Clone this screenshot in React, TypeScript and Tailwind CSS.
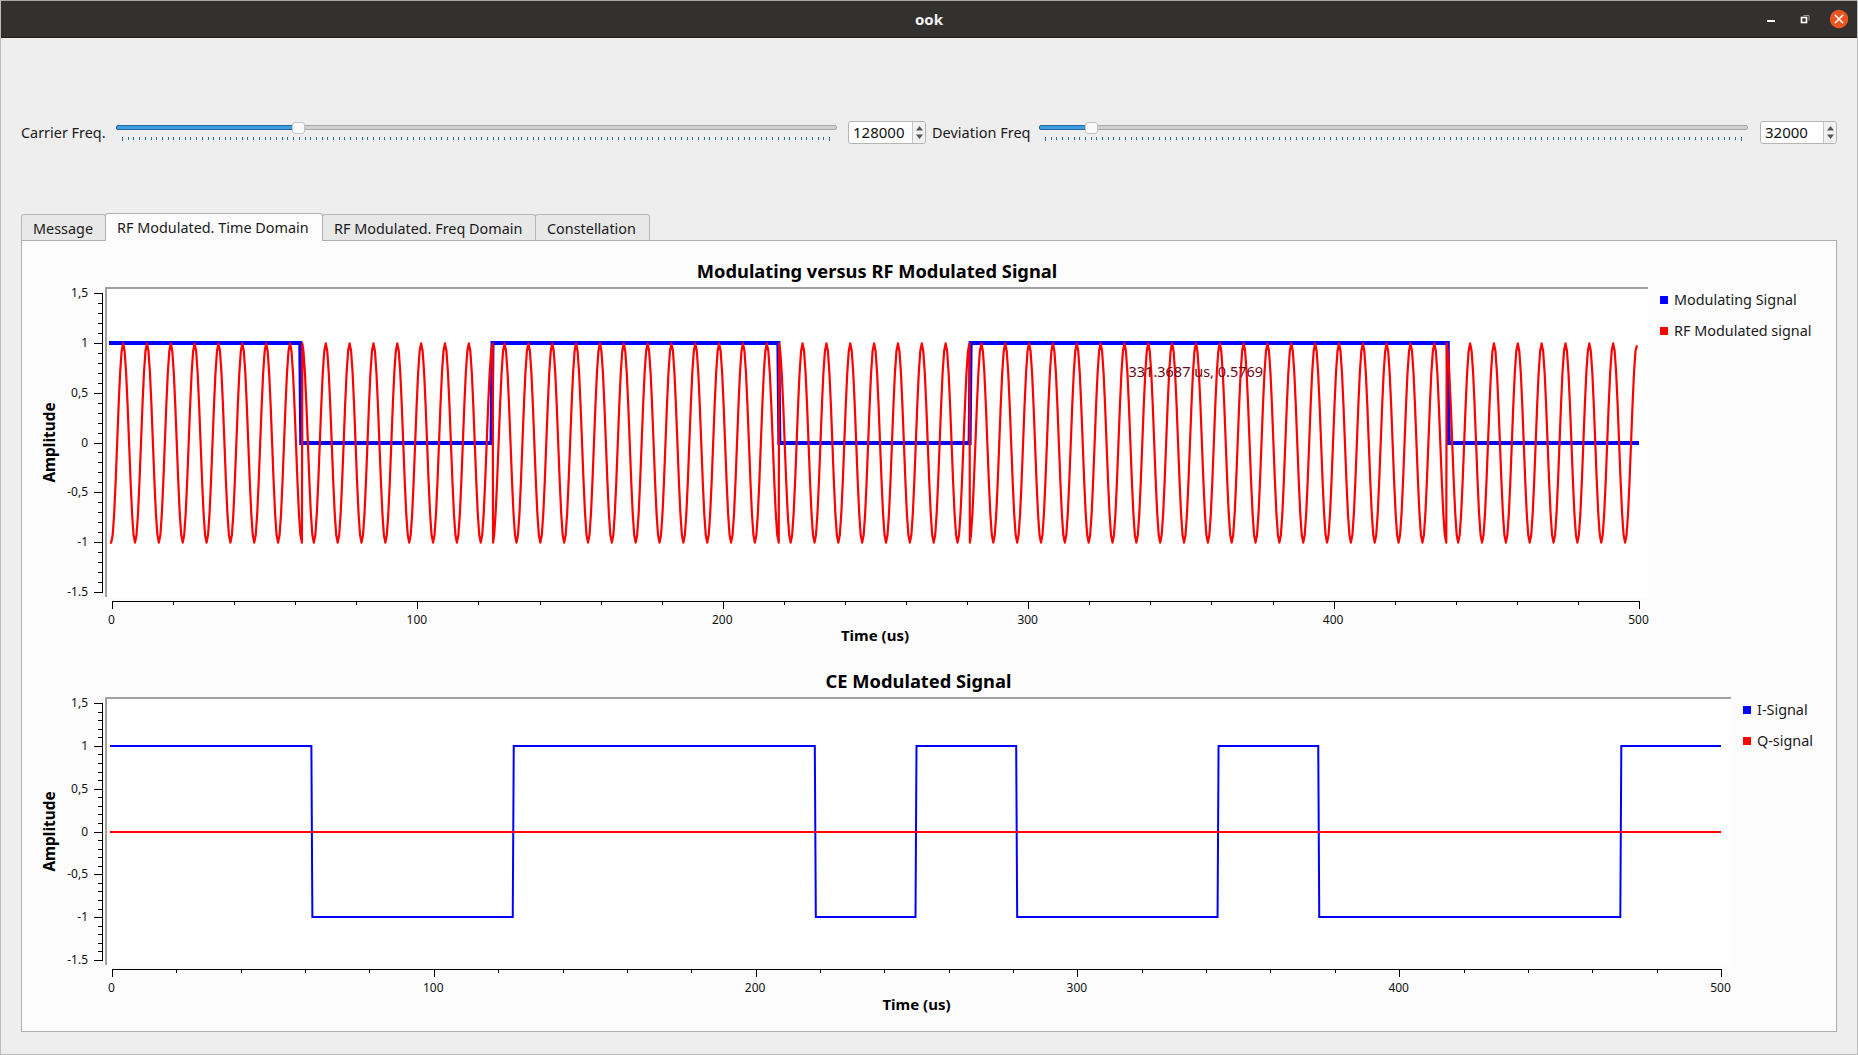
import React from "react";

const SEGMENTS = [62.5, 125, 218.75, 281.25, 437.5, 500];
const IQ_STEPS = [62.5, 125, 218.75, 250, 281.25, 343.75, 375, 468.75, 500];

/** Square wave path, alternating between two levels at each step time */
function stepPath(steps: number[], x: (t: number) => number, hi: number, lo: number) {
  let level = hi;
  let d = `M${x(0)} ${hi}`;
  steps.forEach((t, i) => {
    d += ` L${x(t)} ${level}`;
    if (i < steps.length - 1) {
      level = level === hi ? lo : hi;
      d += ` L${x(t) + 1} ${level}`;
    }
  });
  return d;
}

/** OOK carrier: phase flips every time the modulating signal changes */
function rfPath() {
  const x = (t: number) => 111.2 + 3.0516 * t;
  const y = (v: number) => 443 - 99.6 * v;
  const dt = 7.8125 / 16;
  const sign = (t: number) => {
    let idx = SEGMENTS.findIndex((s) => t < s - 1e-6);
    if (idx < 0) idx = SEGMENTS.length - 1;
    return idx % 2 === 0 ? -1 : 1;
  };
  let d = `M110 ${y(-1)}`;
  for (let i = 0; i <= 1024; i++) {
    const t = i * dt;
    const c = Math.cos(2 * Math.PI * 0.128 * t);
    if (i > 0 && i < 1024 && sign(t) !== sign(t - dt)) {
      d += ` L${x(t).toFixed(2)} ${y(sign(t - dt) * c).toFixed(2)}`;
      d += ` L${(x(t) + 0.4).toFixed(2)} ${y(sign(t) * c).toFixed(2)}`;
    } else {
      d += ` L${x(t).toFixed(2)} ${y((i === 1024 ? 1 : sign(t)) * c * (i === 1024 ? 0.98 : 1)).toFixed(2)}`;
    }
  }
  return d;
}

interface AxisProps {
  box: { x: number; y: number; w: number; h: number };
  canvasRight: number;
  canvasBottom: number;
  frameTop: number;
  frameBottom: number;
  yTop: number;
  yBottom: number;
  xZero: number;
  xEnd: number;
  xAxisY: number;
  children: React.ReactNode;
}

const Y_LABELS = ["1,5", "1", "0,5", "0", "-0,5", "-1", "-1.5"];

function PlotAxes({ box, canvasRight, canvasBottom, frameTop, frameBottom, yTop, yBottom, xZero, xEnd, xAxisY, children }: AxisProps) {
  const yStep = (yBottom - yTop) / 30;
  const xStep = (xEnd - xZero) / 25;
  const ampY = (yTop + yBottom) / 2;

  return (
    <svg
      width={box.w}
      height={box.h}
      viewBox={`${box.x} ${box.y} ${box.w} ${box.h}`}
      className="block"
    >
      <rect x={105} y={frameTop - 1} width={canvasRight - 105} height={canvasBottom - frameTop + 1} fill="#ffffff" />
      <g shapeRendering="crispEdges">
        <rect x={105} y={frameTop - 1} width={canvasRight - 105} height={2} fill="#a0a0a0" />
        <rect x={105} y={frameTop - 1} width={2} height={frameBottom - frameTop + 1} fill="#a0a0a0" />
        {/* y axis */}
        <rect x={102} y={yTop} width={1} height={yBottom - yTop + 1} fill="#000" />
        {Array.from({ length: 31 }, (_, i) => (
          <rect
            key={i}
            x={i % 5 === 0 ? 94 : 98}
            y={Math.round(yTop + i * yStep)}
            width={i % 5 === 0 ? 8 : 4}
            height={1}
            fill="#000"
          />
        ))}
        {/* x axis */}
        <rect x={xZero} y={xAxisY} width={xEnd - xZero + 1} height={1} fill="#000" />
        {Array.from({ length: 26 }, (_, i) => (
          <rect
            key={i}
            x={Math.round(xZero + i * xStep)}
            y={xAxisY}
            width={1}
            height={i % 5 === 0 ? 8 : 4}
            fill="#000"
          />
        ))}
      </g>
      {Y_LABELS.map((label, i) => (
        <text
          key={label}
          x={88}
          y={yTop + i * yStep * 5 + 4}
          textAnchor="end"
          fill="#111"
          className="text-[12px]"
        >
          {label}
        </text>
      ))}
      {[0, 100, 200, 300, 400, 500].map((v, i) => (
        <text
          key={v}
          x={xZero + i * xStep * 5 - 0.5}
          y={xAxisY + 22.5}
          textAnchor="middle"
          fill="#111"
          className="text-[12px]"
        >
          {v}
        </text>
      ))}
      <text
        x={55}
        y={ampY}
        textAnchor="middle"
        transform={`rotate(-90 55 ${ampY})`}
        fill="#000"
        className="text-[15.4px] font-bold"
      >
        Amplitude
      </text>
      {children}
    </svg>
  );
}

function LegendRow({ color, label }: { color: string; label: string }) {
  return (
    <div className="flex h-[31px] items-center">
      <span className={`w-2 h-2 ${color}`} />
      <span className="ml-[6px] text-[14.4px] text-[#1a1a1a]">{label}</span>
    </div>
  );
}

function SliderRow({ width, fill, ticks }: { width: number; fill: number; ticks: number }) {
  return (
    <div className="relative h-[23px] shrink-0" style={{ width }}>
      <div className="absolute left-0 right-0 top-[4px] h-[5px] rounded-[2px] border border-[#a9a9a9] bg-[#d0d0d0]" />
      <div
        className="absolute left-0 top-[4px] h-[5px] rounded-l-[2px] border border-[#22689a] bg-[#3d9fe2]"
        style={{ width: fill }}
      />
      <div
        className="absolute top-[1px] h-[12px] w-[13px] rounded-[3px] border border-[#c4c4c4] bg-[#fafafa]"
        style={{ left: fill - 6 }}
      />
      <div className="flex items-start justify-between pl-[6px] pr-[6px] pt-[16px]">
        {Array.from({ length: ticks }, (_, i) => (
          <span
            key={i}
            className={`w-px bg-[#2b6f96] ${i === 0 || i === ticks - 1 ? "h-[4px]" : "h-[3px]"}`}
          />
        ))}
      </div>
    </div>
  );
}

function SpinBox({ value, className }: { value: string; className: string }) {
  return (
    <div className={`flex h-[23px] shrink-0 rounded-[3px] border border-[#b5b5b5] bg-white ${className}`}>
      <span className="flex-1 pl-[4px] text-[15px] leading-[21px] text-[#111]">{value}</span>
      <div className="flex w-[13px] items-center justify-center rounded-r-[3px] border-l border-[#c4c4c4] bg-[#f1f1f1]">
        <svg width="9" height="15" viewBox="0 0 9 15">
          <path d="M4.5 1 L8 5.5 L1 5.5 Z" fill="#555" />
          <path d="M4.5 14 L8 9.5 L1 9.5 Z" fill="#555" />
        </svg>
      </div>
    </div>
  );
}

function Tab({ label, width, active }: { label: string; width: number; active?: boolean }) {
  return (
    <div
      className={
        active
          ? "relative z-10 -mb-px -ml-px h-[28px] rounded-t-[3px] border border-b-0 border-[#b0b0b0] bg-[#fcfcfc] pl-[11px] text-[14.4px] leading-[27px] text-[#1a1a1a]"
          : "h-[26px] -ml-px first:ml-0 rounded-t-[3px] border border-b-0 border-[#b8b8b8] bg-[#e8e8e8] pl-[11px] text-[14.4px] leading-[27px] text-[#1a1a1a]"
      }
      style={{ width }}
    >
      {label}
    </div>
  );
}

export default function App() {
  const x1 = (t: number) => 109 + 3.06 * t;
  const x2 = (t: number) => 110 + 3.222 * t;

  return (
    <div className="flex h-[1055px] w-[1858px] flex-col overflow-hidden border-x border-b border-[#bdbdbd] bg-[#eeeeee] [font-family:'Noto_Sans',sans-serif]">
      {/* title bar */}
      <div className="grid h-[38px] shrink-0 grid-cols-[1fr_auto_1fr] items-center border-t border-b border-t-[#a8a8a8] border-b-[#1f1f1f] bg-[#333130] -mx-px">
        <div />
        <span className="text-[15px] font-bold text-[#f2f2f2]">ook</span>
        <div className="flex justify-end pr-[10px]">
          <svg width="81" height="36" viewBox="1767 1 81 36">
            <rect x="1767" y="20" width="8" height="2" fill="#fff" />
            <path d="M1803.5 15.5 H1809 V20.5" fill="none" stroke="#9a9a9a" strokeWidth="1" />
            <rect x="1801.5" y="17.5" width="5" height="5" fill="none" stroke="#fff" strokeWidth="1.6" />
            <circle cx="1839" cy="19" r="9.2" fill="#e95420" />
            <path d="M1834.8 14.8 L1843.2 23.2 M1843.2 14.8 L1834.8 23.2" stroke="#fff" strokeWidth="1.6" />
          </svg>
        </div>
      </div>

      {/* sliders */}
      <div className="mt-[83px] flex h-[23px] items-start pl-[20px]">
        <span className="w-[95px] shrink-0 text-[14.4px] leading-[23px] text-[#1a1a1a]">Carrier Freq.</span>
        <SliderRow width={721} fill={182} ticks={125} />
        <SpinBox value="128000" className="ml-[11px] w-[78px]" />
        <span className="ml-[6px] w-[107px] shrink-0 text-[14.5px] leading-[23px] text-[#1a1a1a]">Deviation Freq</span>
        <SliderRow width={709} fill={52} ticks={123} />
        <SpinBox value="32000" className="ml-[12px] w-[77px]" />
      </div>

      {/* tabs */}
      <div className="mt-[69px] flex h-[27px] items-end pl-[20px]">
        <Tab label="Message" width={85} />
        <Tab label="RF Modulated. Time Domain" width={218} active />
        <Tab label="RF Modulated. Freq Domain" width={214} />
        <Tab label="Constellation" width={115} />
      </div>

      <div className="ml-[20px] h-[792px] w-[1816px] border border-[#aeaeae] bg-[#fcfcfc] pt-[16px]">
        {/* first plot */}
        <div className="flex">
          <div className="w-[1630px]">
            <div className="ml-[84px] h-[28px] w-[1542px] text-center text-[18.3px] font-bold leading-[28px] text-black">
              Modulating versus RF Modulated Signal
            </div>
            <PlotAxes
              box={{ x: 22, y: 285, w: 1630, h: 342 }}
              canvasRight={1648}
              canvasBottom={598}
              frameTop={288}
              frameBottom={597}
              yTop={293}
              yBottom={592}
              xZero={112}
              xEnd={1639}
              xAxisY={601}
            >
              <path d={stepPath(SEGMENTS, x1, 343, 443)} fill="none" stroke="#0000ff" strokeWidth="4" />
              <path d={rfPath()} fill="none" stroke="#ff0000" strokeWidth="2.2" strokeLinejoin="round" />
              <text x={1128.5} y={377} fill="#6b0a14" className="text-[14.5px]">
                331.3687 us, 0.5769
              </text>
            </PlotAxes>
            <div className="ml-[90px] h-[16px] w-[1526px] text-center text-[15px] font-bold leading-[16px] text-black">
              Time (us)
            </div>
          </div>
          <div className="pl-[8px] pt-[27px]">
            <LegendRow color="bg-[#0000ff]" label="Modulating Signal" />
            <LegendRow color="bg-[#ff0000]" label="RF Modulated signal" />
          </div>
        </div>

        {/* second plot */}
        <div className="mt-[24px] flex">
          <div className="w-[1713px]">
            <div className="ml-[84px] h-[28px] w-[1625px] text-center text-[18.3px] font-bold leading-[28px] text-black">
              CE Modulated Signal
            </div>
            <PlotAxes
              box={{ x: 22, y: 695, w: 1713, h: 301 }}
              canvasRight={1731}
              canvasBottom={967}
              frameTop={698}
              frameBottom={965}
              yTop={703}
              yBottom={960}
              xZero={112}
              xEnd={1721}
              xAxisY={969}
            >
              <path d={stepPath(IQ_STEPS, x2, 746, 917)} fill="none" stroke="#0000ff" strokeWidth="2" />
              <path d="M110 832 H1721" fill="none" stroke="#ff0000" strokeWidth="2" />
            </PlotAxes>
            <div className="ml-[90px] h-[16px] w-[1609px] text-center text-[15px] font-bold leading-[16px] text-black">
              Time (us)
            </div>
          </div>
          <div className="pl-[8px] pt-[27px]">
            <LegendRow color="bg-[#0000ff]" label="I-Signal" />
            <LegendRow color="bg-[#ff0000]" label="Q-signal" />
          </div>
        </div>
      </div>
    </div>
  );
}
